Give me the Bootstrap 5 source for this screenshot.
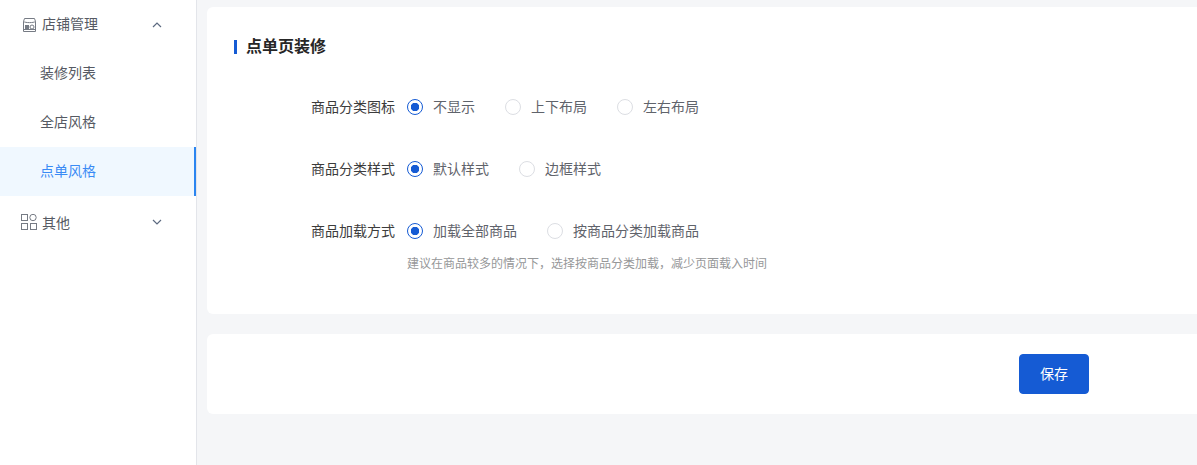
<!DOCTYPE html>
<html lang="zh-CN">
<head>
    <meta charset="UTF-8">
    <title>点单页装修</title>
    <link rel="stylesheet" href="https://cdn.jsdelivr.net/npm/bootstrap@5.3.0/dist/css/bootstrap.min.css">
    <style>
        html, body {
            height: 100%;
            overflow: hidden;
        }

        body {
            background-color: #f5f6f8;
            font-family: "Liberation Sans", "Noto Sans CJK SC", sans-serif;
            font-size: 14px;
            color: #333;
        }

        .page-wrap {
            height: 465px;
        }

        .side-menu {
            width: 197px;
            background-color: #fff;
            border-right: 1px solid #e3e5ea;
        }

        .menu-row {
            height: 49px;
            color: #565a63;
        }

        .menu-top {
            padding: 0 34px 0 21px;
        }

        .menu-top svg.menu-icon {
            margin-right: 5px;
        }

        .menu-top.menu-other {
            margin-top: 1px;
        }

        .menu-other .menu-text {
            padding-top: 3px;
        }

        .menu-sub {
            padding-left: 40px;
        }

        .menu-sub.is-active {
            color: #3a8bf5;
            background-color: #f0f8ff;
            border-right: 2px solid #2b85f0;
        }

        .main-area {
            padding: 7px 0 0 10px;
        }

        .panel-box {
            background-color: #fff;
            border-radius: 6px 0 0 6px;
        }

        .form-panel {
            height: 307px;
            padding: 33px 0 0 27px;
        }

        .panel-title {
            font-size: 16px;
            font-weight: 700;
            line-height: 20px;
            color: #262626;
            border-left: 3px solid #155bd4;
            padding-left: 9px;
            height: 14px;
            display: flex;
            align-items: center;
            margin-bottom: 22px;
        }

        .set-row {
            height: 62px;
            display: flex;
            align-items: center;
        }

        .set-label {
            width: 161px;
            text-align: right;
            color: #3c3c3c;
            margin-right: 12px;
        }

        .radio-item {
            margin-right: 30px;
            color: #5f636b;
        }

        .radio-item .form-check-input {
            width: 16px;
            height: 16px;
            margin: 0 10px 0 0;
            float: none;
            border-color: #dcdee3;
            flex-shrink: 0;
        }

        .radio-item .form-check-input:checked {
            background-color: #fff;
            border-color: #155bd4;
            background-image: radial-gradient(circle, #155bd4 0, #155bd4 4px, transparent 4.5px);
        }

        .radio-item .form-check-input:focus {
            box-shadow: none;
        }

        .set-hint {
            font-size: 12px;
            color: #969799;
            line-height: 16px;
            margin: -6px 0 0 173px;
        }

        .save-panel {
            height: 80px;
            margin-top: 20px;
            padding: 20px 108px 0 0;
        }

        .save-btn {
            width: 70px;
            height: 40px;
            background-color: #155bd4;
            border-color: #155bd4;
            border-radius: 4px;
            font-size: 14px;
            padding: 0;
        }
    </style>
</head>
<body>

    <div class="page-wrap d-flex">
        <div class="side-menu flex-shrink-0">
            <div class="menu-row menu-top d-flex align-items-center">
                <svg class="menu-icon" width="16" height="16" viewBox="0 0 16 16" fill="none" stroke="#767b84" stroke-width="1">
                    <path d="M3.500 1.500h10l1 3v10h-12v-10z"/>
                    <path d="M2.500 4.500c2 1.500 10 1.500 12 0"/>
                    <rect x="4.500" y="8.500" width="3" height="3" fill="#767b84"/>
                    <circle cx="11" cy="10" r="2"/>
                    <path d="M2.500 12.500h12"/>
                </svg>
                <span class="flex-grow-1">店铺管理</span>
                <svg width="10" height="6" viewBox="0 0 10 6" fill="none" stroke="#5c6a80" stroke-width="1.2">
                    <path d="M1 5l4-4 4 4"/>
                </svg>
            </div>
            <div class="menu-row menu-sub d-flex align-items-center">装修列表</div>
            <div class="menu-row menu-sub d-flex align-items-center">全店风格</div>
            <div class="menu-row menu-sub is-active d-flex align-items-center">点单风格</div>
            <div class="menu-row menu-top menu-other d-flex align-items-center">
                <svg class="menu-icon" width="16" height="16" viewBox="0 0 16 16" fill="none" stroke="#767b84" stroke-width="1">
                    <rect x="0.500" y="0.500" width="6" height="6"/>
                    <circle cx="12" cy="3.500" r="3.200"/>
                    <rect x="0.500" y="9.500" width="6" height="6"/>
                    <rect x="9.500" y="9.500" width="6" height="6"/>
                </svg>
                <span class="flex-grow-1 menu-text">其他</span>
                <svg width="10" height="6" viewBox="0 0 10 6" fill="none" stroke="#5c6a80" stroke-width="1.2">
                    <path d="M1 1l4 4 4-4"/>
                </svg>
            </div>
        </div>

        <div class="main-area flex-grow-1">
            <div class="panel-box form-panel">
                <div class="panel-title">点单页装修</div>

                <div class="set-row">
                    <div class="set-label">商品分类图标</div>
                    <label class="radio-item d-flex align-items-center">
                        <input class="form-check-input" type="radio" name="iconType" checked>不显示
                    </label>
                    <label class="radio-item d-flex align-items-center">
                        <input class="form-check-input" type="radio" name="iconType">上下布局
                    </label>
                    <label class="radio-item d-flex align-items-center">
                        <input class="form-check-input" type="radio" name="iconType">左右布局
                    </label>
                </div>

                <div class="set-row">
                    <div class="set-label">商品分类样式</div>
                    <label class="radio-item d-flex align-items-center">
                        <input class="form-check-input" type="radio" name="catStyle" checked>默认样式
                    </label>
                    <label class="radio-item d-flex align-items-center">
                        <input class="form-check-input" type="radio" name="catStyle">边框样式
                    </label>
                </div>

                <div class="set-row">
                    <div class="set-label">商品加载方式</div>
                    <label class="radio-item d-flex align-items-center">
                        <input class="form-check-input" type="radio" name="loadType" checked>加载全部商品
                    </label>
                    <label class="radio-item d-flex align-items-center">
                        <input class="form-check-input" type="radio" name="loadType">按商品分类加载商品
                    </label>
                </div>
                <div class="set-hint">建议在商品较多的情况下，选择按商品分类加载，减少页面载入时间</div>
            </div>

            <div class="panel-box save-panel d-flex justify-content-end align-items-start">
                <button type="button" class="btn btn-primary save-btn">保存</button>
            </div>
        </div>
    </div>

    <script src="https://cdn.jsdelivr.net/npm/bootstrap@5.3.0/dist/js/bootstrap.bundle.min.js"></script>
</body>
</html>
